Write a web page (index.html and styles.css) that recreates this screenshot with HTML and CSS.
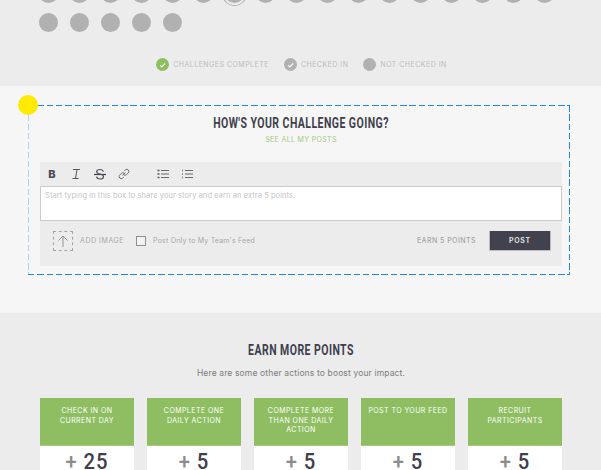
FILE: index.html
```html
<!DOCTYPE html>
<html lang="en">
<head>
  <meta charset="UTF-8">
  <title>Challenge</title>
  <link rel="stylesheet" href="styles.css">
</head>
<body>
  <section class="calendar">
    <div class="days">
      <span class="day"></span><span class="day"></span><span class="day"></span><span class="day"></span><span class="day"></span><span class="day"></span>
      <span class="day today"></span>
      <span class="day"></span><span class="day"></span><span class="day"></span><span class="day"></span><span class="day"></span><span class="day"></span><span class="day"></span><span class="day"></span><span class="day"></span><span class="day"></span>
      <span class="day"></span><span class="day"></span><span class="day"></span><span class="day"></span><span class="day"></span>
    </div>
    <div class="legend">
      <div class="legend-item">
        <span class="dot dot-green"><svg viewBox="0 0 14 14" width="14" height="14"><path d="M4.500 7.300l1.800 1.800L9.800 5.300" fill="none" stroke="#fff" stroke-width="1.100"/></svg></span>
        Challenges Complete
      </div>
      <div class="legend-item">
        <span class="dot"><svg viewBox="0 0 14 14" width="14" height="14"><path d="M4.500 7.300l1.800 1.800L9.800 5.300" fill="none" stroke="#fff" stroke-width="1.100"/></svg></span>
        Checked In
      </div>
      <div class="legend-item">
        <span class="dot"></span>
        Not Checked In
      </div>
    </div>
  </section>

  <section class="post">
    <div class="post-box">
      <span class="marker"></span>
      <h2 class="heading">How's Your Challenge Going?</h2>
      <a class="see-all" href="#">See All My Posts</a>
      <div class="editor">
        <div class="toolbar">
          <span class="tool tool-bold">B</span>
          <svg class="tool-icon" viewBox="0 0 14 14" width="14" height="14"><path d="M4 2.500h7M3.500 11.500h6M8 2.500L6.500 11.500" fill="none" stroke="#55565f" stroke-width="1"/></svg>
          <svg class="tool-icon" viewBox="0 0 14 14" width="14" height="14"><path d="M1 7.500h12" stroke="#3f404c" stroke-width="1.200" fill="none"/><path d="M10.300 4.600C10 3.200 8.800 2.500 7 2.500 5 2.500 3.700 3.400 3.700 4.700c0 1.300 1.200 2 3.300 2.500 2.300.5 3.500 1.200 3.500 2.500 0 1.400-1.500 2.300-3.500 2.300-1.900 0-3.200-.8-3.500-2.300" fill="none" stroke="#55565f" stroke-width="1.200"/></svg>
          <svg class="tool-icon" viewBox="0 0 14 14" width="14" height="14"><path d="M5.500 8.500l3-3M7.300 3.900l1.300-1.300a2.200 2.200 0 0 1 3 3l-2 2a2.200 2.200 0 0 1-2.800.2M6.700 10.100l-1.300 1.300a2.200 2.200 0 0 1-3-3l2-2a2.200 2.200 0 0 1 2.800-.2" fill="none" stroke="#6a6b73" stroke-width="1"/></svg>
          <svg class="tool-icon tool-list" viewBox="0 0 14 14" width="14" height="14"><path d="M5 3.500h8M5 7h8M5 10.500h8" stroke="#6a6b73" stroke-width="1"/><path d="M1.500 3.500h2M1.500 7h2M1.500 10.500h2" stroke="#55565f" stroke-width="1.600"/></svg>
          <svg class="tool-icon" viewBox="0 0 14 14" width="14" height="14"><path d="M5 3.500h8M5 7h8M5 10.500h8" stroke="#6a6b73" stroke-width="1"/><path d="M2.500 2.500v2M2.500 6v2M2.500 9.500v2" stroke="#8a8b92" stroke-width="1"/></svg>
        </div>
        <div class="input">Start typing in this box to share your story and earn an extra 5 points.</div>
        <div class="editor-foot">
          <span class="upload"><svg viewBox="0 0 12 14" width="12" height="14"><path d="M6 13V2M1.500 6.500L6 2l4.500 4.500" fill="none" stroke="#8a8a8a" stroke-width="0.900"/></svg></span>
          <span class="add-image">Add Image</span>
          <span class="checkbox"></span>
          <span class="team-only">Post Only to My Team's Feed</span>
          <span class="earn">Earn 5 Points</span>
          <button class="post-btn">Post</button>
        </div>
      </div>
    </div>
  </section>

  <section class="more">
    <h2 class="heading">Earn More Points</h2>
    <p class="more-sub">Here are some other actions to boost your impact.</p>
    <div class="cards">
      <div class="card">
        <div class="card-title">Check In On Current Day</div>
        <div class="card-points"><span class="plus">+</span> 25</div>
      </div>
      <div class="card">
        <div class="card-title">Complete One Daily Action</div>
        <div class="card-points"><span class="plus">+</span> 5</div>
      </div>
      <div class="card">
        <div class="card-title">Complete More Than One Daily Action</div>
        <div class="card-points"><span class="plus">+</span> 5</div>
      </div>
      <div class="card">
        <div class="card-title">Post To Your Feed</div>
        <div class="card-points"><span class="plus">+</span> 5</div>
      </div>
      <div class="card">
        <div class="card-title">Recruit Participants</div>
        <div class="card-points"><span class="plus">+</span> 5</div>
      </div>
    </div>
  </section>
</body>
</html>
```

FILE: styles.css
```css
* {
  box-sizing: border-box;
}

html, body {
  height: 470px;
  overflow: hidden;
}

body {
  margin: 0;
  font-family: 'Inter', 'Liberation Sans', sans-serif;
  background-color: #ececec;
  color: #3f404c;
}

.calendar {
  display: flow-root;
  height: 86px;
  padding-left: 39px;
  background-color: #ececec;
}

.days {
  display: grid;
  grid-template-columns: repeat(17, 19px);
  grid-auto-rows: 19px;
  column-gap: 12px;
  row-gap: 10px;
  margin-top: -16px;
}

.day {
  border-radius: 50%;
  background-color: #b1b1b1;
}

.day.today {
  box-shadow: 0 0 0 2px #ececec, 0 0 0 3px #b1b1b1;
}

.legend {
  display: flex;
  justify-content: center;
  gap: 15px;
  margin-top: 26px;
  padding-right: 37px;
}

.legend-item {
  display: flex;
  align-items: center;
  gap: 4px;
  font-size: 7px;
  letter-spacing: 0.48px;
  text-transform: uppercase;
  color: #bcbcbc;
}

.dot {
  display: flex;
  align-items: center;
  justify-content: center;
  width: 13px;
  height: 13px;
  border-radius: 50%;
  background-color: #b1b1b1;
}

.dot-green {
  background-color: #8fbe62;
}

.post {
  height: 226px;
  padding: 19px 31px 0 28px;
  background-color: #f6f6f6;
}

.post-box {
  position: relative;
  height: 170px;
  padding: 10px 8px 0 12px;
  text-align: center;
  background-image:
    repeating-linear-gradient(90deg, #1f86e3 0 6.5px, transparent 6.5px 9.3px),
    repeating-linear-gradient(90deg, #1f86e3 0 6.5px, transparent 6.5px 9.3px),
    repeating-linear-gradient(180deg, #a9d3f8 0 6.5px, transparent 6.5px 9.3px),
    repeating-linear-gradient(180deg, #1f86e3 0 6.5px, transparent 6.5px 9.3px);
  background-size: 100% 1px, 100% 1px, 1px 100%, 1px 100%;
  background-position: left top, left bottom, left top, right top;
  background-repeat: no-repeat;
}

.marker {
  position: absolute;
  top: -10px;
  left: -10px;
  width: 20px;
  height: 20px;
  border-radius: 50%;
  background-color: #ffea00;
}

.heading {
  margin: 0;
  font-family: 'Roboto', 'Liberation Sans', sans-serif;
  font-size: 14px;
  line-height: 16px;
  font-weight: 700;
  letter-spacing: 0.6px;
  text-transform: uppercase;
  color: #3f404c;
  transform: scaleX(0.75);
}

.see-all {
  display: block;
  margin-top: 4px;
  font-size: 7px;
  line-height: 9px;
  letter-spacing: 0.35px;
  text-transform: uppercase;
  text-decoration: none;
  color: #a3c97f;
}

.editor {
  margin-top: 18px;
  background-color: #ececec;
}

.toolbar {
  display: flex;
  align-items: center;
  height: 24px;
  padding-left: 5px;
  gap: 10px;
}

.tool {
  width: 14px;
  font-size: 11px;
  font-weight: 800;
  text-align: center;
  color: #4a4b55;
}

.tool-list {
  margin-left: 15px;
}

.input {
  height: 35px;
  padding: 4px;
  font-size: 7.500px;
  line-height: 9px;
  letter-spacing: 0.07px;
  text-align: left;
  color: #c4c4c4;
  background-color: #fff;
  border: 1px solid #cbcbcb;
}

.editor-foot {
  display: flex;
  align-items: center;
  height: 45px;
  padding: 0 11px 6px 13px;
  font-size: 7px;
  color: #a8a8a8;
}

.upload {
  display: flex;
  align-items: center;
  justify-content: center;
  width: 20px;
  height: 20px;
  border: 1px dashed #a5a5a5;
}

.add-image {
  margin-left: 7px;
  letter-spacing: 0.55px;
  text-transform: uppercase;
}

.checkbox {
  width: 10px;
  height: 10px;
  margin-left: 12px;
  background-color: #f2f2f2;
  border: 1px solid #8f8f8f;
}

.team-only {
  margin-left: 7px;
  letter-spacing: 0.2px;
}

.earn {
  margin-left: auto;
  font-size: 7px;
  font-weight: 500;
  letter-spacing: 0.45px;
  text-transform: uppercase;
  color: #a5a5a5;
}

.post-btn {
  width: 62px;
  height: 20px;
  margin-left: 13px;
  padding: 0;
  font-family: inherit;
  font-size: 7px;
  font-weight: 600;
  letter-spacing: 0.7px;
  text-transform: uppercase;
  color: #e8e8e8;
  background-color: #41424e;
  border: 1px solid #bcbcc0;
  border-width: 0 1px 1px 1px;
}

.more {
  padding: 29px 39px 0 40px;
  text-align: center;
  border-top: 1px solid #f3f3f3;
}

.more-sub {
  margin: 10px 0 0;
  font-size: 8.500px;
  line-height: 11px;
  letter-spacing: 0.14px;
  color: #7c7c7c;
}

.cards {
  display: grid;
  grid-template-columns: repeat(5, 94px);
  column-gap: 13px;
  margin-top: 19px;
}

.card {
  height: 72px;
  background-color: #fff;
}

.card-title {
  height: 48px;
  padding: 8px 6px 0;
  font-size: 7px;
  line-height: 9.500px;
  letter-spacing: 0.45px;
  text-transform: uppercase;
  color: #fff;
  background-color: #8fbe62;
  border-bottom: 1px solid #a3cb7d;
}

.card-points {
  padding-top: 7px;
  font-family: 'Roboto', 'Liberation Sans', sans-serif;
  font-size: 22px;
  line-height: 17px;
  font-weight: 500;
  letter-spacing: 1px;
  color: #3f404c;
  transform: scaleX(0.92);
}

.plus {
  color: #8c8c8c;
}
```
